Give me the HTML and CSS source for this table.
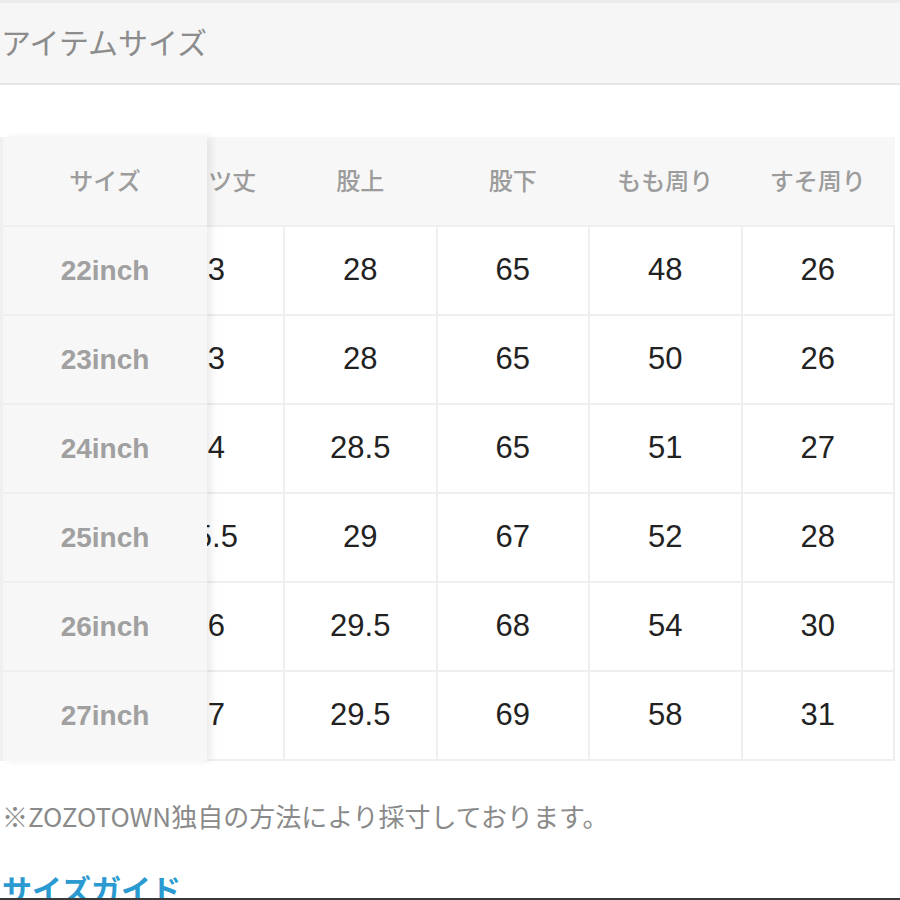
FILE: index.html
```html
<!DOCTYPE html>
<html lang="ja">
<head>
<meta charset="utf-8">
<link rel="stylesheet" href="styles.css">
</head>
<body>
<div class="page">
  <div class="title-bar">アイテムサイズ</div>
  <div class="size-table">
    <div class="key-col">
      <div class="key-head">サイズ</div>
      <div class="key-cell">22inch</div>
      <div class="key-cell">23inch</div>
      <div class="key-cell">24inch</div>
      <div class="key-cell">25inch</div>
      <div class="key-cell">26inch</div>
      <div class="key-cell">27inch</div>
    </div>
    <div class="data-view">
      <div class="data-grid">
        <div class="row head-row">
          <div class="hcell">パンツ丈</div><div class="hcell">股上</div><div class="hcell">股下</div><div class="hcell">もも周り</div><div class="hcell">すそ周り</div>
        </div>
        <div class="row body-row">
          <div class="cell">93</div><div class="cell">28</div><div class="cell">65</div><div class="cell">48</div><div class="cell">26</div>
        </div>
        <div class="row body-row">
          <div class="cell">93</div><div class="cell">28</div><div class="cell">65</div><div class="cell">50</div><div class="cell">26</div>
        </div>
        <div class="row body-row">
          <div class="cell">94</div><div class="cell">28.5</div><div class="cell">65</div><div class="cell">51</div><div class="cell">27</div>
        </div>
        <div class="row body-row">
          <div class="cell">95.5</div><div class="cell">29</div><div class="cell">67</div><div class="cell">52</div><div class="cell">28</div>
        </div>
        <div class="row body-row">
          <div class="cell">96</div><div class="cell">29.5</div><div class="cell">68</div><div class="cell">54</div><div class="cell">30</div>
        </div>
        <div class="row body-row">
          <div class="cell">97</div><div class="cell">29.5</div><div class="cell">69</div><div class="cell">58</div><div class="cell">31</div>
        </div>
      </div>
    </div>
  </div>
  <p class="note">※ZOZOTOWN独自の方法により採寸しております。</p>
  <a class="guide-link" href="#">サイズガイド</a>
</div>
</body>
</html>
```
FILE: styles.css
```css
html, body {
  margin: 0;
  padding: 0;
  background: #ffffff;
}
.page {
  height: 898px;
  overflow: hidden;
  border-bottom: 2px solid #3a3a3a;
  font-family: "Noto Sans CJK JP", "Noto Sans", sans-serif;
  color: #8a8a8a;
}
.title-bar {
  height: 80px;
  border-top: 3px solid #ececec;
  border-bottom: 2px solid #e6e6e6;
  background: #f6f6f6;
  font-size: 30px;
  line-height: 76px;
  padding-left: 1px;
  color: #8c8c8c;
}
.size-table {
  margin-top: 52px;
  width: 895px;
  display: flex;
  border-left: 3px solid #f0f0f0;
  box-sizing: border-box;
}
.key-col {
  width: 204px;
  flex: none;
  background: #f7f7f7;
  position: relative;
  z-index: 1;
  box-shadow: 5px 0 7px rgba(0, 0, 0, 0.07);
}
.key-head {
  height: 84px;
  padding-bottom: 4px;
  display: flex;
  align-items: center;
  justify-content: center;
  font-size: 24px;
  font-weight: 500;
  color: #9c9c9c;
}
.key-cell {
  height: 87px;
  border-top: 2px solid #efefef;
  display: flex;
  align-items: center;
  justify-content: center;
  font-family: "Liberation Sans", "Noto Sans CJK JP", sans-serif;
  font-size: 28px;
  font-weight: 700;
  color: #a0a0a0;
}
.data-view {
  flex: 1;
  overflow: hidden;
}
.data-grid {
  margin-left: -74.5px;
  width: 762.5px;
  background: #efefef;
  padding-right: 2px;
  padding-bottom: 2px;
}
.row {
  display: grid;
  grid-template-columns: repeat(5, 150.5px);
  column-gap: 2px;
}
.head-row {
  background: #f7f7f7;
  height: 84px;
  padding-bottom: 4px;
}
.hcell {
  display: flex;
  align-items: center;
  justify-content: center;
  font-size: 24px;
  font-weight: 500;
  color: #9c9c9c;
}
.body-row {
  padding-top: 2px;
}
.cell {
  height: 87px;
  padding-bottom: 2px;
  box-sizing: border-box;
  background: #ffffff;
  display: flex;
  align-items: center;
  justify-content: center;
  font-family: "Liberation Sans", "Noto Sans CJK JP", sans-serif;
  font-size: 31px;
  color: #222222;
}
.note {
  margin: 40px 0 0 2px;
  font-size: 26px;
  line-height: 30px;
  color: #8a8a8a;
}
.guide-link {
  display: block;
  margin: 38px 0 0 2px;
  font-size: 30px;
  font-weight: 700;
  color: #2a9ad0;
  text-decoration: none;
  line-height: 38px;
}
```
